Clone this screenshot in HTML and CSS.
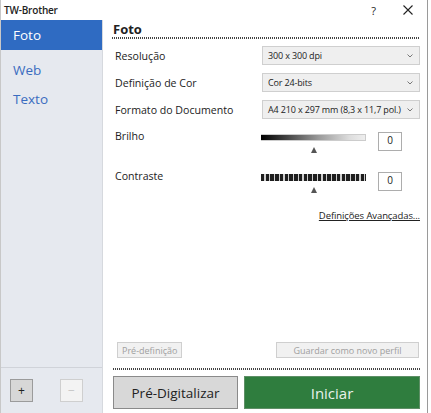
FILE: index.html
```html
<!DOCTYPE html>
<html lang="pt">
<head>
<meta charset="utf-8">
<title>TW-Brother</title>
<link rel="stylesheet" href="styles.css">
</head>
<body>
<div class="window">
  <div class="titlebar">
    <span class="title">TW-Brother</span>
    <span class="tb-btns">
      <span class="help">?</span>
      <svg class="close" width="10" height="10" viewBox="0 0 10 10"><path d="M0.5 0.5 L9.5 9.5 M9.5 0.5 L0.5 9.5" stroke="#222" stroke-width="1.1" fill="none"/></svg>
    </span>
  </div>
  <div class="body">
    <div class="sidebar">
      <div class="nav">
        <div class="nav-item active">Foto</div>
        <div class="nav-item">Web</div>
        <div class="nav-item">Texto</div>
      </div>
      <div class="side-foot">
        <div class="sq-btn">+</div>
        <div class="sq-btn disabled">−</div>
      </div>
    </div>
    <div class="main">
      <div class="heading">Foto</div>
      <div class="dots"></div>
      <div class="rows">
        <div class="row">
          <span class="label">Resolução</span>
          <div class="select"><span>300 x 300 dpi</span><svg class="chev" width="6" height="4" viewBox="0 0 6 4"><path d="M0.5 0.5 L3 3 L5.5 0.5" stroke="#777" fill="none"/></svg></div>
        </div>
        <div class="row">
          <span class="label">Definição de Cor</span>
          <div class="select"><span>Cor 24-bits</span><svg class="chev" width="6" height="4" viewBox="0 0 6 4"><path d="M0.5 0.5 L3 3 L5.5 0.5" stroke="#777" fill="none"/></svg></div>
        </div>
        <div class="row">
          <span class="label">Formato do Documento</span>
          <div class="select"><span>A4 210 x 297 mm (8,3 x 11,7 pol.)</span><svg class="chev" width="6" height="4" viewBox="0 0 6 4"><path d="M0.5 0.5 L3 3 L5.5 0.5" stroke="#777" fill="none"/></svg></div>
        </div>
      </div>
      <div class="slider-row first">
        <span class="label">Brilho</span>
        <div class="slider">
          <div class="track grad"></div>
          <div class="thumb"></div>
        </div>
        <div class="num">0</div>
      </div>
      <div class="slider-row">
        <span class="label">Contraste</span>
        <div class="slider">
          <div class="track stripes"></div>
          <div class="thumb"></div>
        </div>
        <div class="num">0</div>
      </div>
      <div class="adv"><span class="link">Definições Avançadas...</span></div>
      <div class="spacer"></div>
      <div class="profile-row">
        <div class="small-btn">Pré-definição</div>
        <div class="small-btn wide">Guardar como novo perfil</div>
      </div>
      <div class="dots bottom"></div>
      <div class="actions">
        <div class="btn pre">Pré-Digitalizar</div>
        <div class="btn start">Iniciar</div>
      </div>
    </div>
  </div>
</div>
</body>
</html>
```
FILE: styles.css
```css
* { box-sizing: border-box; }
html, body { margin: 0; padding: 0; background: #fff; }
body { font-family: "Open Sans", "Noto Sans", "Liberation Sans", sans-serif; color: #222; width: 431px; height: 413px; overflow: hidden; }
.window { width: 428px; height: 413px; border-right: 1px solid #9a9a9a; border-left: 1px solid #c8c8c8; display: flex; flex-direction: column; }
.titlebar { height: 20px; display: flex; align-items: center; justify-content: space-between; padding: 0 14px 0 3px; flex: none; }
.title { font-size: 10px; font-weight: 600; letter-spacing: -0.2px; }
.tb-btns { display: flex; align-items: center; gap: 27px; }
.help { font-size: 11px; }
.close { display: block; }
.body { flex: 1; display: flex; min-height: 0; }
.sidebar { width: 102px; background: #e6e9ef; display: flex; flex-direction: column; border-right: 1px solid #d6d9de; flex: none; }
.nav { flex: 1; }
.nav-item { height: 29px; display: flex; align-items: center; padding-left: 12px; font-size: 13.5px; color: #3a6cc0; }
.nav-item.active { background: #2f6bc2; color: #fff; height: 30px; margin-bottom: 5px; }
.side-foot { height: 46px; border-top: 1px solid #d0d3d9; display: flex; gap: 27px; padding: 11px 0 0 9px; }
.sq-btn { width: 23px; height: 23px; border: 1px solid #9b9b9b; background: #d7d7d7; display: flex; align-items: center; justify-content: center; font-size: 12px; line-height: 1; color: #222; }
.sq-btn.disabled { background: #f3f3f3; border-color: #cfcfcf; color: #c4c4c4; }
.main { flex: 1; display: flex; flex-direction: column; padding: 0 7px 4px 9px; }
.heading { font-size: 13px; font-weight: 700; padding: 1px 0 0 1px; height: 17px; line-height: 17px; }
.dots { height: 2px; background: repeating-linear-gradient(90deg, #444 0 1px, transparent 1px 2px); margin-top: 0; }
.rows { display: flex; flex-direction: column; gap: 8px; margin-top: 7px; }
.row { display: flex; align-items: center; justify-content: space-between; height: 19px; padding-left: 3px; }
.label { font-size: 10.6px; color: #222; }
.select { width: 158px; height: 19px; background: #efefef; border: 1px solid #cfcfcf; display: flex; align-items: center; justify-content: space-between; padding: 0 6px 0 5px; font-size: 9px; letter-spacing: -0.15px; color: #222; white-space: nowrap; overflow: hidden; }
.chev { flex: none; display: block; }
.slider-row { display: flex; align-items: flex-start; padding-left: 3px; margin-top: 12px; height: 28px; }
.slider-row.first { margin-top: 13px; }
.slider-row .label { width: 146px; line-height: 14px; margin-top: -3px; }
.slider { width: 105px; display: flex; flex-direction: column; align-items: center; margin-top: 2px; }
.track { width: 105px; height: 7px; }
.grad { background: linear-gradient(90deg, #000 0%, #444 25%, #999 55%, #ddd 85%, #eee 100%); border: 1px solid #ccc; border-left: none; }
.stripes { background: repeating-linear-gradient(90deg, #1e1e1e 0 3.3px, #cfcfcf 3.3px 4.75px); }
.thumb { width: 0; height: 0; border-left: 3px solid transparent; border-right: 3px solid transparent; border-bottom: 6px solid #555; margin-top: 6px; }
.num { width: 24px; height: 19px; border: 1px solid #adadad; margin-left: 12px; font-size: 10px; text-align: center; line-height: 15px; }
.adv { display: flex; justify-content: flex-end; margin-top: 9px; padding-right: 0; }
.link { font-size: 9.5px; text-decoration: underline; color: #222; letter-spacing: -0.1px; }
.spacer { flex: 1; }
.profile-row { display: flex; justify-content: space-between; padding: 0 1px 0 5px; }
.small-btn { height: 16px; border: 1px solid #cfcfcf; background: #f1f1f1; color: #a0a0a0; font-size: 9px; display: flex; align-items: center; padding: 0 4px; }
.small-btn.wide { width: 143px; justify-content: center; }
.dots.bottom { margin-top: 10px; margin-left: 1px; }
.actions { display: flex; gap: 6px; margin-top: 6px; padding-left: 1px; }
.btn { height: 33px; display: flex; align-items: center; justify-content: center; font-size: 13.5px; }
.btn.pre { width: 125px; background: #d8d8d8; border: 1px solid #8a8a8a; color: #222; }
.btn.start { flex: 1; background: #2f7d3e; border: 1px solid #5e8f66; color: #e9f2ea; font-size: 15px; }
```
